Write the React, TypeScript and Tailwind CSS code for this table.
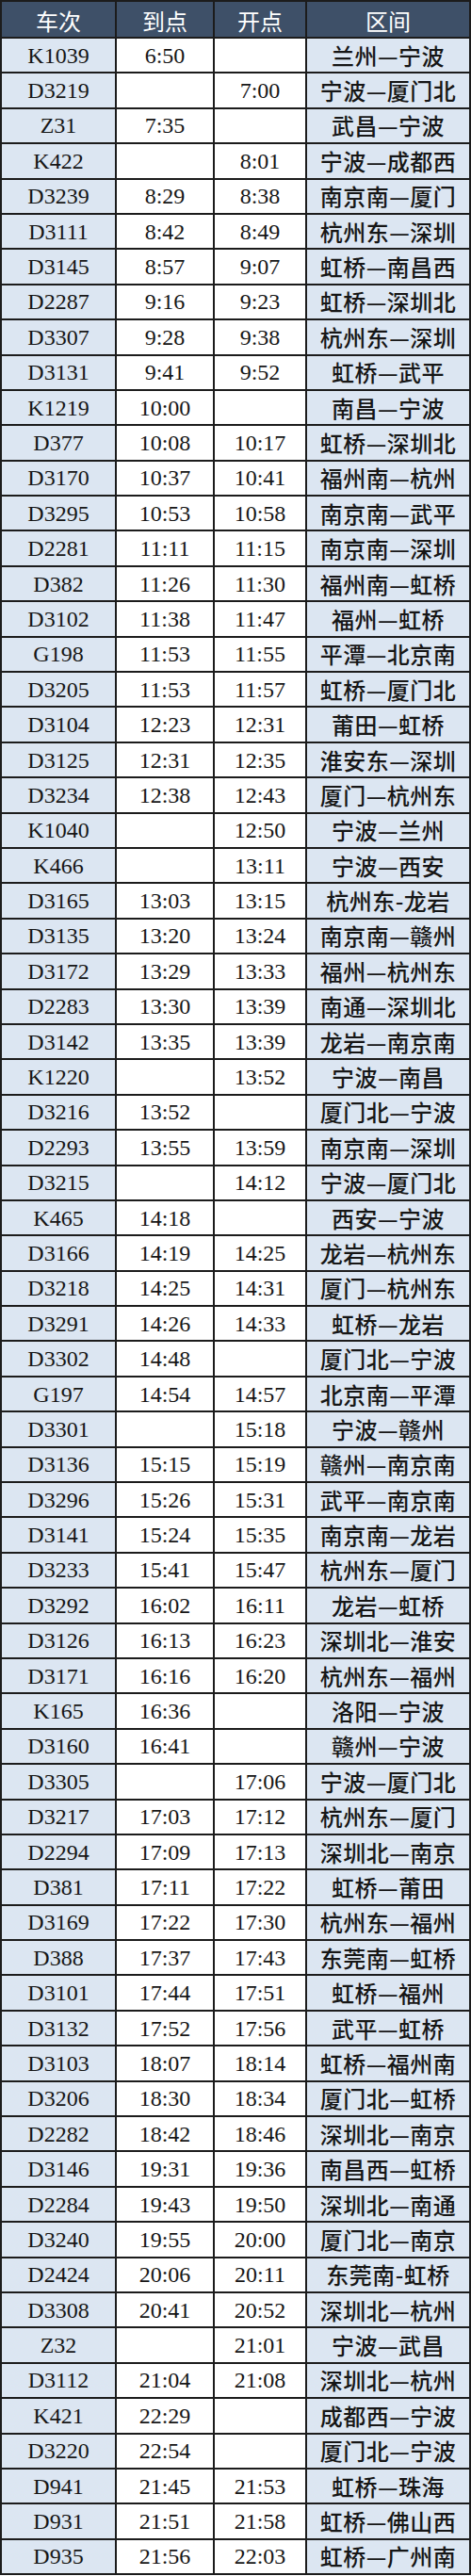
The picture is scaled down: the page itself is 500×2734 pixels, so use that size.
const rows: [string, string, string, string][] = [
  ["K1039", "6:50", "", "兰州—宁波"],
  ["D3219", "", "7:00", "宁波—厦门北"],
  ["Z31", "7:35", "", "武昌—宁波"],
  ["K422", "", "8:01", "宁波—成都西"],
  ["D3239", "8:29", "8:38", "南京南—厦门"],
  ["D3111", "8:42", "8:49", "杭州东—深圳"],
  ["D3145", "8:57", "9:07", "虹桥—南昌西"],
  ["D2287", "9:16", "9:23", "虹桥—深圳北"],
  ["D3307", "9:28", "9:38", "杭州东—深圳"],
  ["D3131", "9:41", "9:52", "虹桥—武平"],
  ["K1219", "10:00", "", "南昌—宁波"],
  ["D377", "10:08", "10:17", "虹桥—深圳北"],
  ["D3170", "10:37", "10:41", "福州南—杭州"],
  ["D3295", "10:53", "10:58", "南京南—武平"],
  ["D2281", "11:11", "11:15", "南京南—深圳"],
  ["D382", "11:26", "11:30", "福州南—虹桥"],
  ["D3102", "11:38", "11:47", "福州—虹桥"],
  ["G198", "11:53", "11:55", "平潭—北京南"],
  ["D3205", "11:53", "11:57", "虹桥—厦门北"],
  ["D3104", "12:23", "12:31", "莆田—虹桥"],
  ["D3125", "12:31", "12:35", "淮安东—深圳"],
  ["D3234", "12:38", "12:43", "厦门—杭州东"],
  ["K1040", "", "12:50", "宁波—兰州"],
  ["K466", "", "13:11", "宁波—西安"],
  ["D3165", "13:03", "13:15", "杭州东-龙岩"],
  ["D3135", "13:20", "13:24", "南京南—赣州"],
  ["D3172", "13:29", "13:33", "福州—杭州东"],
  ["D2283", "13:30", "13:39", "南通—深圳北"],
  ["D3142", "13:35", "13:39", "龙岩—南京南"],
  ["K1220", "", "13:52", "宁波—南昌"],
  ["D3216", "13:52", "", "厦门北—宁波"],
  ["D2293", "13:55", "13:59", "南京南—深圳"],
  ["D3215", "", "14:12", "宁波—厦门北"],
  ["K465", "14:18", "", "西安—宁波"],
  ["D3166", "14:19", "14:25", "龙岩—杭州东"],
  ["D3218", "14:25", "14:31", "厦门—杭州东"],
  ["D3291", "14:26", "14:33", "虹桥—龙岩"],
  ["D3302", "14:48", "", "厦门北—宁波"],
  ["G197", "14:54", "14:57", "北京南—平潭"],
  ["D3301", "", "15:18", "宁波—赣州"],
  ["D3136", "15:15", "15:19", "赣州—南京南"],
  ["D3296", "15:26", "15:31", "武平—南京南"],
  ["D3141", "15:24", "15:35", "南京南—龙岩"],
  ["D3233", "15:41", "15:47", "杭州东—厦门"],
  ["D3292", "16:02", "16:11", "龙岩—虹桥"],
  ["D3126", "16:13", "16:23", "深圳北—淮安"],
  ["D3171", "16:16", "16:20", "杭州东—福州"],
  ["K165", "16:36", "", "洛阳—宁波"],
  ["D3160", "16:41", "", "赣州—宁波"],
  ["D3305", "", "17:06", "宁波—厦门北"],
  ["D3217", "17:03", "17:12", "杭州东—厦门"],
  ["D2294", "17:09", "17:13", "深圳北—南京"],
  ["D381", "17:11", "17:22", "虹桥—莆田"],
  ["D3169", "17:22", "17:30", "杭州东—福州"],
  ["D388", "17:37", "17:43", "东莞南—虹桥"],
  ["D3101", "17:44", "17:51", "虹桥—福州"],
  ["D3132", "17:52", "17:56", "武平—虹桥"],
  ["D3103", "18:07", "18:14", "虹桥—福州南"],
  ["D3206", "18:30", "18:34", "厦门北—虹桥"],
  ["D2282", "18:42", "18:46", "深圳北—南京"],
  ["D3146", "19:31", "19:36", "南昌西—虹桥"],
  ["D2284", "19:43", "19:50", "深圳北—南通"],
  ["D3240", "19:55", "20:00", "厦门北—南京"],
  ["D2424", "20:06", "20:11", "东莞南-虹桥"],
  ["D3308", "20:41", "20:52", "深圳北—杭州"],
  ["Z32", "", "21:01", "宁波—武昌"],
  ["D3112", "21:04", "21:08", "深圳北—杭州"],
  ["K421", "22:29", "", "成都西—宁波"],
  ["D3220", "22:54", "", "厦门北—宁波"],
  ["D941", "21:45", "21:53", "虹桥—珠海"],
  ["D931", "21:51", "21:58", "虹桥—佛山西"],
  ["D935", "21:56", "22:03", "虹桥—广州南"],
];

const grid = "grid grid-cols-[120px_102px_96px_172px] gap-[2px]";
const serif = "font-['Liberation_Serif','Noto_Sans_CJK_SC',serif]";

export default function App() {
  return (
    <div className="w-[500px] bg-[#1c1c1c] p-[2px]">
      <div className="flex flex-col gap-[2px]">
        <div className={`${grid} h-[37px]`}>
          {["车次", "到点", "开点", "区间"].map((h) => (
            <div
              key={h}
              className="flex items-center justify-center bg-[#3e5068] pt-[3px] font-['Noto_Sans_CJK_SC',sans-serif] text-[24px] leading-none text-white"
            >
              {h}
            </div>
          ))}
        </div>
        {rows.map(([train, arrive, depart, route], i) => (
          <div key={i} className={`${grid} h-[35.4px] text-[24px] leading-none text-[#161616]`}>
            <div className={`flex items-center justify-center bg-[#dce6f2] ${serif}`}>{train}</div>
            <div className={`flex items-center justify-center bg-white ${serif}`}>{arrive}</div>
            <div className={`flex items-center justify-center bg-white ${serif}`}>{depart}</div>
            <div className="flex items-center justify-center bg-[#dce6f2] font-['Noto_Sans_CJK_SC',sans-serif] font-medium tracking-[0.5px]">
              {route}
            </div>
          </div>
        ))}
      </div>
    </div>
  );
}
